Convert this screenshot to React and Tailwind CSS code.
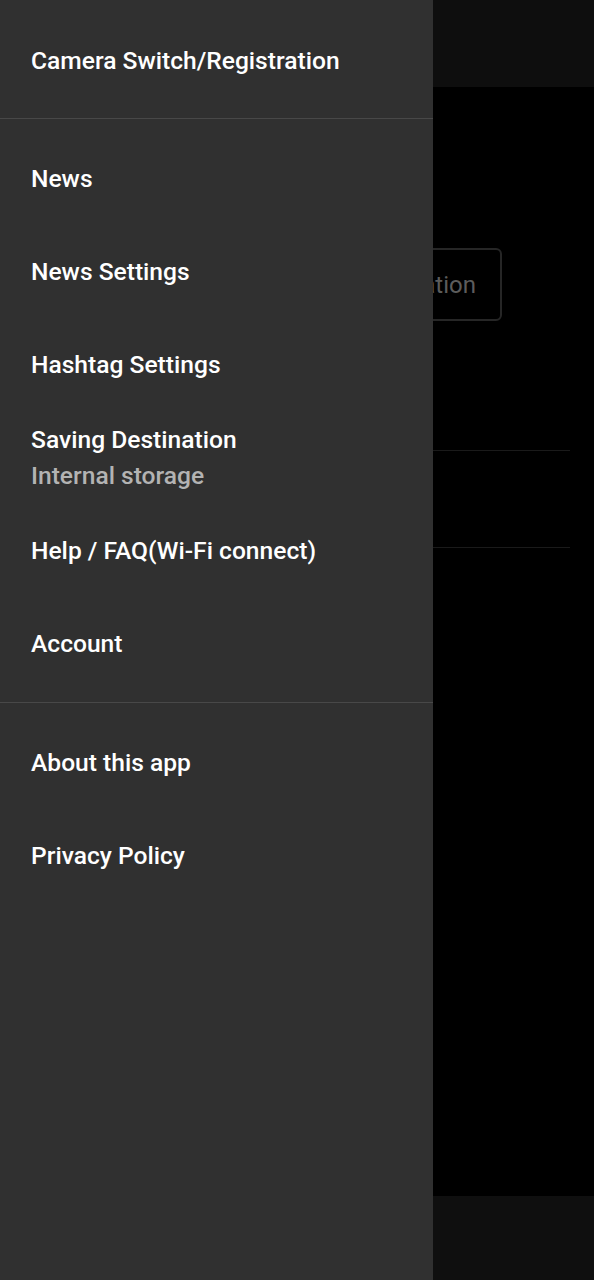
import React from 'react';

const groups = [
  [
    { label: "News" },
    { label: "News Settings" },
    { label: "Hashtag Settings" },
    { label: "Saving Destination", sub: "Internal storage" },
    { label: "Help / FAQ(Wi-Fi connect)" },
    { label: "Account" },
  ],
  [
    { label: "About this app" },
    { label: "Privacy Policy" },
  ],
];

function DrawerItem({ label, sub }) {
  return (
    <div className="h-[93px] flex flex-col justify-center px-[31px]">
      <span className="text-[24.6px] leading-[36px] font-medium text-white">{label}</span>
      {sub && <span className="text-[24.6px] leading-[36px] font-medium text-[#b3b3b3]">{sub}</span>}
    </div>
  );
}

export default function App() {
  return (
    <div className="relative w-[594px] h-[1280px] overflow-hidden font-['Roboto',sans-serif]">
      {/* Page behind the drawer */}
      <div className="flex flex-col h-full">
        <div className="h-[87px] bg-[#0e0e0e]"></div>
        <main className="flex-1 bg-black px-6 flex flex-col">
          <div className="mt-[161px] ml-auto mr-[68px] h-[73px] px-[24px] flex items-center border-2 border-[#262626] rounded-md">
            <span className="text-[24px] text-[#5c5c5c]">Saving Destination</span>
          </div>
          <div className="mt-[129px] h-px bg-[#1a1a1a]"></div>
          <div className="mt-[96px] h-px bg-[#1a1a1a]"></div>
        </main>
        <div className="h-[84px] bg-[#0f0f0f]"></div>
      </div>

      {/* Navigation drawer */}
      <aside className="absolute inset-y-0 left-0 w-[433px] bg-[#303030] flex flex-col">
        <div className="h-[118px] flex items-center px-[31px] pt-[4px]">
          <span className="text-[24.6px] font-medium text-white">Camera Switch/Registration</span>
        </div>
        <div className="border-t border-[#484848] pt-[13px] pb-[12px]">
          {groups[0].map((it) => (
            <DrawerItem key={it.label} {...it} />
          ))}
        </div>
        <div className="border-t border-[#484848] pt-[13px]">
          {groups[1].map((it) => (
            <DrawerItem key={it.label} {...it} />
          ))}
        </div>
      </aside>
    </div>
  );
}
